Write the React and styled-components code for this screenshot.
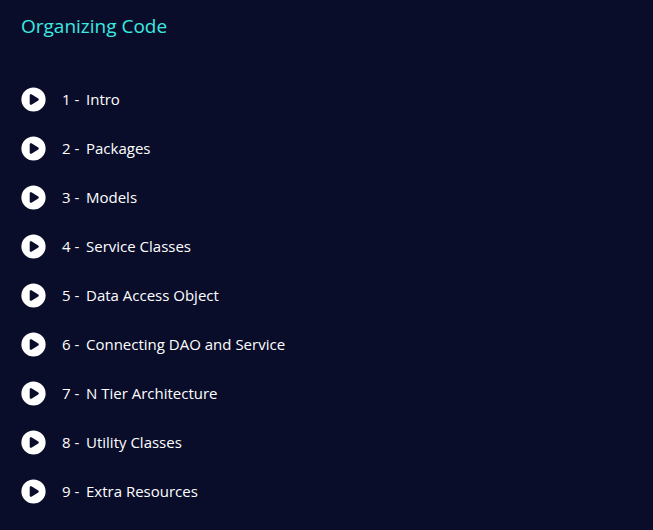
import React from "react";
import styled, { createGlobalStyle } from "styled-components";

const GlobalStyle = createGlobalStyle`
  * { box-sizing: border-box; }
  body {
    margin: 0;
    background: #090d2a;
    color: #ffffff;
    font-family: "Segoe UI", "Open Sans", "Noto Sans", sans-serif;
  }
`;

const Section = styled.main`
  min-height: 100vh;
  padding: 12px 21px 14px;
`;

const Title = styled.h1`
  margin: 0 0 47px;
  color: #3ceae0;
  font-size: 19px;
  font-weight: 400;
  line-height: 28px;
`;

const LessonList = styled.ul`
  display: flex;
  flex-direction: column;
  gap: 24px;
  margin: 0;
  padding: 0;
  list-style: none;
`;

const LessonLink = styled.a`
  display: flex;
  align-items: center;
  gap: 16px;
  color: inherit;
  font-size: 15px;
  line-height: 25px;
  text-decoration: none;
`;

const LessonNumber = styled.span`
  display: inline-block;
  min-width: 24px;
  white-space: pre;
`;

const PlayIcon = styled.svg`
  flex: none;
  width: 25px;
  height: 25px;
`;

const lessons = [
  "Intro",
  "Packages",
  "Models",
  "Service Classes",
  "Data Access Object",
  "Connecting DAO and Service",
  "N Tier Architecture",
  "Utility Classes",
  "Extra Resources",
];

export default function App() {
  return (
    <>
      <GlobalStyle />
      <Section>
        <Title>Organizing Code</Title>
        <LessonList>
          {lessons.map((name, i) => (
            <li key={name}>
              <LessonLink href={`#lesson-${i + 1}`}>
                <PlayIcon viewBox="-8 -8 528 528" aria-hidden="true">
                  <path
                    fill="currentColor"
                    d="M256 0a256 256 0 1 1 0 512A256 256 0 1 1 256 0zM188.300 147.100c-7.600 4.200-12.300 12.300-12.300 20.900v176c0 8.700 4.700 16.700 12.300 20.900s16.800 4.100 24.300-.5l144-88c7.100-4.400 11.500-12.100 11.500-20.500s-4.400-16.100-11.500-20.500l-144-88c-7.400-4.500-16.700-4.700-24.300-.3z"
                    fillRule="evenodd"
                  />
                </PlayIcon>
                <span>
                  <LessonNumber>{`${i + 1} - `}</LessonNumber>
                  {name}
                </span>
              </LessonLink>
            </li>
          ))}
        </LessonList>
      </Section>
    </>
  );
}
